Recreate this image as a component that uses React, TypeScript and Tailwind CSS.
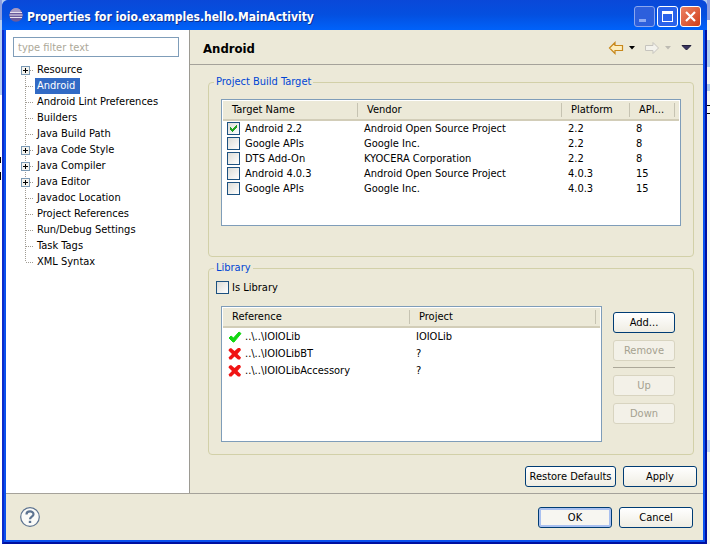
import React, { useState } from "react";

const treeItems = [
  { label: "Resource", expandable: true },
  { label: "Android" },
  { label: "Android Lint Preferences" },
  { label: "Builders" },
  { label: "Java Build Path" },
  { label: "Java Code Style", expandable: true },
  { label: "Java Compiler", expandable: true },
  { label: "Java Editor", expandable: true },
  { label: "Javadoc Location" },
  { label: "Project References" },
  { label: "Run/Debug Settings" },
  { label: "Task Tags" },
  { label: "XML Syntax" },
];

const targets = [
  { name: "Android 2.2", vendor: "Android Open Source Project", platform: "2.2", api: "8" },
  { name: "Google APIs", vendor: "Google Inc.", platform: "2.2", api: "8" },
  { name: "DTS Add-On", vendor: "KYOCERA Corporation", platform: "2.2", api: "8" },
  { name: "Android 4.0.3", vendor: "Android Open Source Project", platform: "4.0.3", api: "15" },
  { name: "Google APIs", vendor: "Google Inc.", platform: "4.0.3", api: "15" },
];

const libraries = [
  { reference: "..\\..\\IOIOLib", project: "IOIOLib", found: true },
  { reference: "..\\..\\IOIOLibBT", project: "?", found: false },
  { reference: "..\\..\\IOIOLibAccessory", project: "?", found: false },
];

function Checkbox({
  id,
  checked,
  onChange,
}: {
  id: string;
  checked: boolean;
  onChange: () => void;
}) {
  return (
    <span className="relative block size-[13px] shrink-0">
      <input
        id={id}
        type="checkbox"
        checked={checked}
        onChange={onChange}
        className="block size-[13px] appearance-none border border-[#1c5180] bg-linear-to-br from-[#dcdcd7] to-white"
      />
      {checked && (
        <svg
          viewBox="0 0 13 13"
          shapeRendering="crispEdges"
          className="pointer-events-none absolute inset-0 size-[13px]"
        >
          <path d="M3 5h1v1h1v1h1V6h1V5h1V4h1V3h1v3H9v1H8v1H7v1H6v1H5V9H4V8H3z" fill="#21a121" />
        </svg>
      )}
    </span>
  );
}

function XpButton({
  children,
  disabled,
  primary,
  className = "",
}: {
  children: React.ReactNode;
  disabled?: boolean;
  primary?: boolean;
  className?: string;
}) {
  const look = disabled
    ? "border-[#d8d4c0] bg-[#f3f1e8] text-[#a5a190]"
    : primary
      ? "border-[#003c74] bg-[#f7f6f1] shadow-[inset_0_0_0_2px_#a9c0f0]"
      : "border-[#003c74] bg-linear-to-b from-white to-[#efede3]";
  return (
    <button
      type="button"
      disabled={disabled}
      className={`h-[21px] rounded-[3px] border pt-px text-center leading-4 whitespace-nowrap ${look} ${className}`}
    >
      {children}
    </button>
  );
}

function HeaderCell({ children, last }: { children: React.ReactNode; last?: boolean }) {
  return (
    <th className="p-0 text-left font-normal">
      <div
        className={`flex h-5 items-center border-b-2 border-[#d2cdb8] bg-[#ece9d8] ${
          last ? "pr-1" : ""
        }`}
      >
        <span className="flex h-[14px] flex-1 items-center border-r border-[#c6c3b2] pt-px pl-[9px]">
          {children}
        </span>
      </div>
    </th>
  );
}

function Group({
  title,
  className,
  children,
}: {
  title: string;
  className: string;
  children: React.ReactNode;
}) {
  return (
    <fieldset className={`min-w-0 rounded-[4px] border border-[#d2d0a8] ${className}`}>
      <legend className="ml-[5px] px-[2px] leading-3 text-[#0046d5]">{title}</legend>
      {children}
    </fieldset>
  );
}

function TitleBar() {
  return (
    <header className="flex h-[30px] shrink-0 items-center rounded-t-[6px] bg-linear-to-b from-[#0a48d8] via-[#0450e0] to-[#0062fa] pr-[6px] pl-[7px] text-white">
      <svg viewBox="0 0 14 14" className="size-[14px]">
        <circle cx="7" cy="7" r="6.800" fill="#6a5a9c" />
        <path d="M3 1.500A7 7 0 0 1 11 1.500L12 4H1z" fill="#a59ac6" />
        <path d="M1 4.500h12M.5 7h13M1 9.500h12" stroke="#e8e2f0" strokeWidth="1.200" />
      </svg>
      <h1 className="ml-1 flex-1 truncate pt-[3px] text-[12px] leading-5 font-bold [text-shadow:1px_1px_#0a2f8f]">
        Properties for ioio.examples.hello.MainActivity
      </h1>
      <div className="flex gap-[2px] pt-[2px]">
        <button
          type="button"
          aria-label="Minimize"
          className="size-[21px] rounded-[3px] border border-[#8ba6ee] bg-[#2d5fdc]"
        >
          <svg viewBox="0 0 19 19" className="size-[19px]">
            <path d="M4 12h7v3H4z" fill="#8ca9f2" />
          </svg>
        </button>
        <button
          type="button"
          aria-label="Maximize"
          className="size-[21px] rounded-[3px] border border-white bg-[#2a62ea]"
        >
          <svg viewBox="0 0 19 19" className="size-[19px]">
            <path d="M4 4h11v11H4zM5 7v7h9V7z" fill="white" fillRule="evenodd" />
          </svg>
        </button>
        <button
          type="button"
          aria-label="Close"
          className="size-[21px] rounded-[3px] border border-white bg-linear-to-br from-[#ec8263] to-[#d03c12]"
        >
          <svg viewBox="0 0 19 19" className="size-[19px]">
            <path d="M5 5l9 9M14 5l-9 9" stroke="white" strokeWidth="2.200" />
          </svg>
        </button>
      </div>
    </header>
  );
}

function Tree() {
  const [selected, setSelected] = useState("Android");

  return (
    <ul className="mt-[5px] pl-2">
      {treeItems.map((item, index) => (
        <li key={item.label} className="flex h-4 items-center">
          <svg viewBox="0 0 14 16" shapeRendering="crispEdges" className="h-4 w-[14px]">
            <path
              d={
                index === 0
                  ? "M4.500 8v8"
                  : index === treeItems.length - 1
                    ? "M4.500 0v8"
                    : "M4.500 0v16"
              }
              stroke="#a09c94"
              strokeDasharray="1 1"
            />
            <path d="M5 8.500h8" stroke="#a09c94" strokeDasharray="1 1" />
            {item.expandable && (
              <>
                <rect x=".5" y="4.500" width="8" height="8" fill="#f4f3ee" stroke="#7b9ab5" />
                <path d="M2 8.500h5M4.500 6v5" stroke="black" />
              </>
            )}
          </svg>
          <button
            type="button"
            onClick={() => setSelected(item.label)}
            className={`h-4 pr-[5px] pl-[2px] leading-4 ${
              selected === item.label ? "bg-[#316ac5] text-white" : ""
            }`}
          >
            {item.label}
          </button>
        </li>
      ))}
    </ul>
  );
}

function PageHeader() {
  return (
    <div className="flex h-[35px] shrink-0 items-center border-b border-[#a5a29a] pr-[11px] pl-[13px]">
      <h2 className="flex-1 pt-[3px] text-[13px] leading-5 font-bold">Android</h2>
      <div className="flex items-center pt-px">
        <button type="button" aria-label="Back">
          <svg viewBox="0 0 16 14" className="h-[14px] w-4">
            <path
              d="M1.500 7L7 1.500v3h7.500v5H7v3z"
              fill="#fdeebd"
              stroke="#c8881c"
              strokeWidth="1.200"
            />
          </svg>
        </button>
        <button type="button" aria-label="Back history" className="ml-[5px]">
          <svg viewBox="0 0 6 4" className="h-1 w-[6px]">
            <path d="M0 0h6L3 3.500z" fill="black" />
          </svg>
        </button>
        <button type="button" aria-label="Forward" disabled className="ml-[9px]">
          <svg viewBox="0 0 16 14" className="h-[14px] w-4">
            <path d="M14.500 7L9 1.500v3H1.500v5H9v3z" fill="#f3f2ec" stroke="#c6c4be" />
          </svg>
        </button>
        <button type="button" aria-label="Forward history" disabled className="ml-[5px]">
          <svg viewBox="0 0 6 4" className="h-1 w-[6px]">
            <path d="M0 0h6L3 3.500z" fill="#bdbbb2" />
          </svg>
        </button>
        <button type="button" aria-label="View menu" className="ml-[10px]">
          <svg viewBox="0 0 11 6" className="h-[6px] w-[11px]">
            <path d="M1 .500h9L5.500 5z" fill="#3a3560" stroke="#22203c" />
          </svg>
        </button>
      </div>
    </div>
  );
}

function BuildTargets() {
  const [target, setTarget] = useState(0);

  return (
    <Group title="Project Build Target" className="h-[181px]">
      <div className="mx-3 mt-[11px] h-[127px] border border-[#7f9db9] bg-white px-px pt-px">
        <table className="w-full table-fixed border-collapse">
          <colgroup>
            <col className="w-[135px]" />
            <col />
            <col className="w-[68px]" />
            <col className="w-[49px]" />
          </colgroup>
          <thead>
            <tr>
              <HeaderCell>Target Name</HeaderCell>
              <HeaderCell>Vendor</HeaderCell>
              <HeaderCell>Platform</HeaderCell>
              <HeaderCell last>API...</HeaderCell>
            </tr>
          </thead>
          <tbody>
            {targets.map((item, index) => (
              <tr key={index} className="h-[15px] leading-[15px]">
                <td className="p-0">
                  <div className="flex items-center gap-[5px] pl-1">
                    <Checkbox
                      id={`target-${index}`}
                      checked={target === index}
                      onChange={() => setTarget(index)}
                    />
                    <label htmlFor={`target-${index}`}>{item.name}</label>
                  </div>
                </td>
                <td className="p-0 pl-[6px]">{item.vendor}</td>
                <td className="p-0 pl-[6px]">{item.platform}</td>
                <td className="p-0 pl-[6px]">{item.api}</td>
              </tr>
            ))}
          </tbody>
        </table>
      </div>
    </Group>
  );
}

function Library() {
  const [isLibrary, setIsLibrary] = useState(false);

  return (
    <Group title="Library" className="mt-[5px] h-[193px]">
      <div className="mt-[7px] flex items-center gap-[3px] pl-[7px]">
        <Checkbox
          id="is-library"
          checked={isLibrary}
          onChange={() => setIsLibrary(!isLibrary)}
        />
        <label htmlFor="is-library" className="leading-[13px]">
          Is Library
        </label>
      </div>
      <div className="mt-3 flex gap-[11px] pr-[18px] pl-3">
        <div className="h-[136px] flex-1 border border-[#7f9db9] bg-white px-px pt-px">
          <table className="w-full table-fixed border-collapse">
            <colgroup>
              <col className="w-[187px]" />
              <col />
            </colgroup>
            <thead>
              <tr>
                <HeaderCell>Reference</HeaderCell>
                <HeaderCell last>Project</HeaderCell>
              </tr>
            </thead>
            <tbody>
              {libraries.map((item) => (
                <tr key={item.reference} className="h-[17px] leading-[17px]">
                  <td className="p-0">
                    <div className="flex items-center gap-[3px] pl-[5px]">
                      <svg viewBox="0 0 14 14" className="size-[14px]">
                        {item.found ? (
                          <path
                            d="M1 8l2-2 2.500 2L11 2l2 1.500L6 12H5z"
                            fill="#12d612"
                            stroke="#12d612"
                          />
                        ) : (
                          <path
                            d="M1 2l2-1 3.500 3L10 1l2 0 1 2-3.500 4 3.500 3.500-1 2h-2L6.500 9.500 3.500 12.500h-2l-1-2L4 7 .5 3.500z"
                            fill="#f01414"
                          />
                        )}
                      </svg>
                      {item.reference}
                    </div>
                  </td>
                  <td className="p-0 pl-[6px]">{item.project}</td>
                </tr>
              ))}
            </tbody>
          </table>
        </div>
        <div className="flex w-[62px] flex-col pt-[6px]">
          <XpButton>Add...</XpButton>
          <XpButton disabled className="mt-[7px]">Remove</XpButton>
          <hr className="my-[6px] border-[#aca899]" />
          <XpButton disabled className="mt-px">Up</XpButton>
          <XpButton disabled className="mt-[7px]">Down</XpButton>
        </div>
      </div>
    </Group>
  );
}

// slivers of the windows that lie behind the dialog
function BackdropLeft() {
  return (
    <div className="w-[2px] shrink-0 bg-white">
      <div className="h-5 bg-[#8c9fe0]" />
      <div className="h-[75px] bg-[#b4cdf2]" />
      <div className="mt-[62px] h-[6px] w-px bg-black" />
      <div className="mt-[9px] h-2 w-px bg-black" />
    </div>
  );
}

function BackdropRight() {
  return (
    <div className="w-[3px] shrink-0 bg-[#f6f6f4]">
      <div className="h-5 bg-[#8c9fe0]" />
      <div className="mt-5 h-[27px] bg-[#aecbf0]" />
      <div className="mt-[17px] h-[7px] bg-[#a9c6ee]" />
      <div className="mt-[14px] h-px bg-black" />
      <div className="mt-[7px] h-px bg-black" />
      <div className="mt-[326px] h-3 bg-[#c0d4fb]" />
    </div>
  );
}

export default function App() {
  return (
    <div className="flex min-h-screen bg-[#b4cdf2] font-['DejaVu_Sans_Condensed','DejaVu_Sans',sans-serif] text-[11px] text-black">
      <BackdropLeft />
      <div className="flex min-w-0 flex-1 flex-col rounded-t-[7px] bg-[#0a50ee]">
        <TitleBar />
        <div className="flex flex-1 flex-col border-x-2 border-b-2 border-l-[#0a2ccc] border-r-[#0010a0] border-b-[#0010a0] px-[2px] pb-[2px]">
          <div className="flex flex-1 flex-col bg-[#ece9d8]">
            <div className="flex flex-1">
              <aside className="w-[184px] shrink-0 border-r border-[#9c9a92] bg-white pt-[7px] pr-[10px] pl-[7px]">
                <input
                  type="text"
                  aria-label="Filter"
                  placeholder="type filter text"
                  className="block h-5 w-full border border-[#7f9db9] px-1 placeholder:text-[#aca899]"
                />
                <Tree />
              </aside>
              <main className="flex min-w-0 flex-1 flex-col">
                <PageHeader />
                <div className="flex-1 pt-[11px] pr-[9px] pl-[18px]">
                  <BuildTargets />
                  <Library />
                </div>
                <div className="flex justify-end gap-[7px] pr-[6px] pb-[6px]">
                  <XpButton className="w-[91px]">Restore Defaults</XpButton>
                  <XpButton className="w-[74px]">Apply</XpButton>
                </div>
              </main>
            </div>
            <footer className="flex h-[47px] shrink-0 items-center border-t border-[#a5a29a] pr-[10px] pl-[14px]">
              <button type="button" aria-label="Help">
                <svg viewBox="0 0 20 20" className="size-5">
                  <circle
                    cx="10"
                    cy="10"
                    r="9.300"
                    fill="#fbfbf8"
                    stroke="#5d7390"
                    strokeWidth="1.200"
                  />
                  <path
                    d="M6.500 7.500c0-4 7-4 7-.3 0 2.300-3.500 2.500-3.500 5"
                    fill="none"
                    stroke="#5d7390"
                    strokeWidth="2.200"
                  />
                  <path d="M8.800 13.800h2.400v2.200H8.800z" fill="#5d7390" />
                </svg>
              </button>
              <div className="ml-auto flex gap-[7px]">
                <XpButton primary className="w-[74px]">OK</XpButton>
                <XpButton className="w-[74px]">Cancel</XpButton>
              </div>
            </footer>
          </div>
        </div>
      </div>
      <BackdropRight />
    </div>
  );
}
